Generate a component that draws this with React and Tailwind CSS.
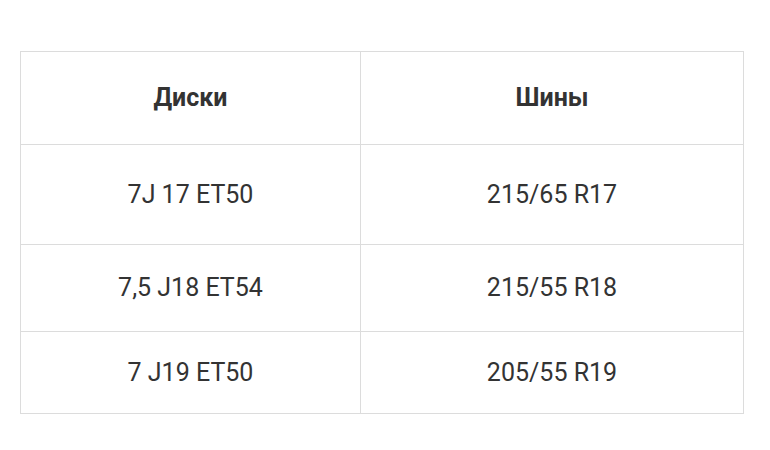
import React from 'react'

const rows = [
  { disk: '7J 17 ET50', tire: '215/65 R17', h: 'h-[100px]' },
  { disk: '7,5 J18 ET54', tire: '215/55 R18', h: 'h-[87px]' },
  { disk: '7 J19 ET50', tire: '205/55 R19', h: 'h-[82px]' },
]

const App = () => {
  return (
    <div className="w-[770px] h-[450px] bg-white pt-[51px] pl-[20px] font-['Roboto',sans-serif] text-[#333]">
      <table className="w-[723px] border-collapse table-fixed">
        <colgroup>
          <col className="w-[340px]" />
          <col className="w-[383px]" />
        </colgroup>
        <thead>
          <tr className="h-[93px]">
            <th className="border border-[#dcdcdc] text-[25px] font-bold text-center">Диски</th>
            <th className="border border-[#dcdcdc] text-[25px] font-bold text-center">Шины</th>
          </tr>
        </thead>
        <tbody>
          {rows.map((r) => (
            <tr key={r.disk} className={r.h}>
              <td className="border border-[#dcdcdc] text-[25px] text-center">{r.disk}</td>
              <td className="border border-[#dcdcdc] text-[25px] text-center">{r.tire}</td>
            </tr>
          ))}
        </tbody>
      </table>
    </div>
  )
}

export default App
